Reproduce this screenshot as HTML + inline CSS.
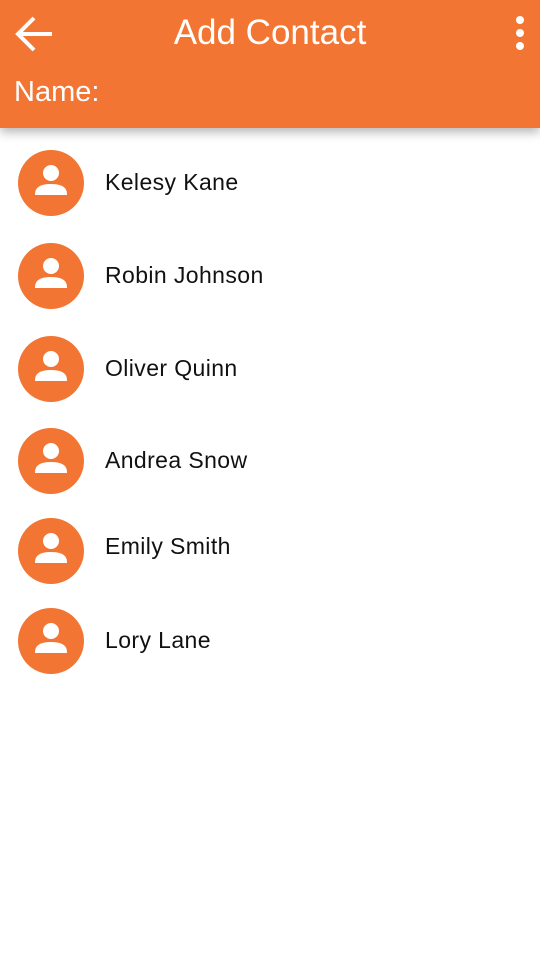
<!DOCTYPE html>
<html><head><meta charset="utf-8"><style>
body{margin:0;width:540px;height:960px;background:#fff;font-family:"Liberation Sans",Roboto,sans-serif;position:relative;overflow:hidden}
.hd{position:absolute;left:0;top:0;width:540px;height:128px;background:#f27533;box-shadow:0 4px 10px rgba(0,0,0,.3)}
.t{position:absolute;left:0;width:540px;top:13px;text-align:center;color:#fff;font-size:35px}
.n{position:absolute;left:14px;top:76px;color:#fff;font-size:29px}
.row{position:absolute;left:0;width:540px;height:66px}
.av{position:absolute;left:18px;top:0;width:66px;height:66px;border-radius:50%;background:#f27533}
.nm{position:absolute;left:105px;top:19px;font-size:23px;color:#111;letter-spacing:0.4px}
</style></head><body>
<div class="hd">
<svg style="position:absolute;left:14px;top:14px" width="40" height="40" viewBox="0 0 40 40"><path d="M4 20H38M20 4L4 20L20 36" stroke="#fff" stroke-width="4" fill="none"/></svg>
<div class="t">Add Contact</div>
<svg style="position:absolute;left:512px;top:14px" width="16" height="40"><circle cx="8" cy="6" r="4" fill="#fff"/><circle cx="8" cy="19" r="4" fill="#fff"/><circle cx="8" cy="32" r="4" fill="#fff"/></svg>
<div class="n">Name:</div>
</div>
<div class="row" style="top:150px"><div class="av"><svg width="66" height="66"><circle cx="33" cy="23" r="8" fill="#fff"/><path d="M17 44Q17 34 33 34Q49 34 49 44V45H17Z" fill="#fff"/></svg></div><div class="nm">Kelesy Kane</div></div>
<div class="row" style="top:243px"><div class="av"><svg width="66" height="66"><circle cx="33" cy="23" r="8" fill="#fff"/><path d="M17 44Q17 34 33 34Q49 34 49 44V45H17Z" fill="#fff"/></svg></div><div class="nm">Robin Johnson</div></div>
<div class="row" style="top:336px"><div class="av"><svg width="66" height="66"><circle cx="33" cy="23" r="8" fill="#fff"/><path d="M17 44Q17 34 33 34Q49 34 49 44V45H17Z" fill="#fff"/></svg></div><div class="nm">Oliver Quinn</div></div>
<div class="row" style="top:428px"><div class="av"><svg width="66" height="66"><circle cx="33" cy="23" r="8" fill="#fff"/><path d="M17 44Q17 34 33 34Q49 34 49 44V45H17Z" fill="#fff"/></svg></div><div class="nm">Andrea Snow</div></div>
<div class="row" style="top:518px"><div class="av"><svg width="66" height="66"><circle cx="33" cy="23" r="8" fill="#fff"/><path d="M17 44Q17 34 33 34Q49 34 49 44V45H17Z" fill="#fff"/></svg></div><div class="nm" style="top:15px">Emily Smith</div></div>
<div class="row" style="top:608px"><div class="av"><svg width="66" height="66"><circle cx="33" cy="23" r="8" fill="#fff"/><path d="M17 44Q17 34 33 34Q49 34 49 44V45H17Z" fill="#fff"/></svg></div><div class="nm">Lory Lane</div></div>
</body></html>
